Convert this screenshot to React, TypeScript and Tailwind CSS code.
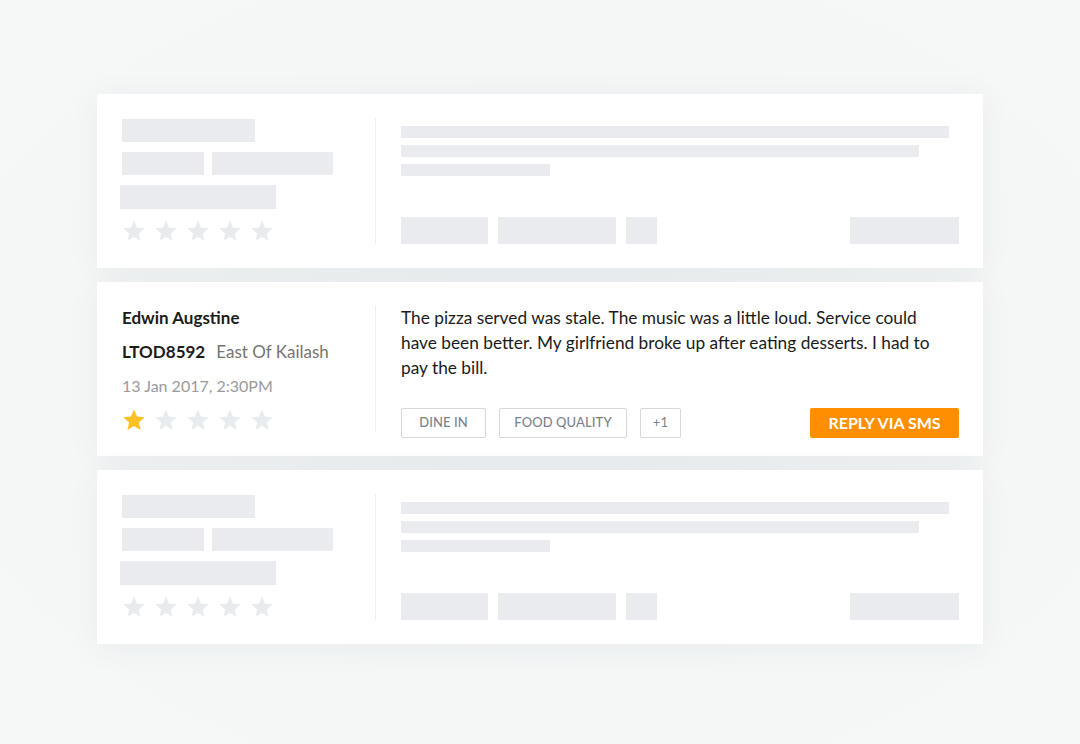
const Star = ({ filled }: { filled?: boolean }) => (
  <svg width="24" height="24" viewBox="0 0 24 24" className="shrink-0">
    <path
      d="M12 1.5l3.1 7.1 7.6.7-5.8 5.1 1.7 7.5L12 17.9l-6.6 4 1.7-7.5-5.8-5.1 7.6-.7z"
      fill={filled ? '#fbc124' : '#e9ecef'}
    />
  </svg>
);

const Stars = ({ count = 0 }: { count?: number }) => (
  <div className="flex h-6 items-center gap-2">
    {[0, 1, 2, 3, 4].map((i) => (
      <Star key={i} filled={i < count} />
    ))}
  </div>
);

const Bar = ({ className }: { className: string }) => <div className={`bg-[#e9ebee] ${className}`} />;

const SkeletonCard = () => (
  <div className="flex h-[174px] bg-white shadow-[0_4px_30px_rgba(30,50,60,0.06)]">
    <div className="flex w-[278px] shrink-0 flex-col gap-[10px] pl-[25px] pt-[25px]">
      <Bar className="h-[23px] w-[133px]" />
      <div className="flex gap-2">
        <Bar className="h-[23px] w-[82px]" />
        <Bar className="h-[23px] w-[121px]" />
      </div>
      <Bar className="-ml-[2px] h-[24px] w-[156px]" />
      <Stars />
    </div>
    <div className="my-6 w-px bg-[#eceef0]" />
    <div className="flex flex-1 flex-col pl-[25px] pr-6 pt-8 pb-6">
      <div className="flex flex-col gap-[7px]">
        <Bar className="h-3 w-[548px]" />
        <Bar className="h-3 w-[518px]" />
        <Bar className="h-3 w-[149px]" />
      </div>
      <div className="mt-auto flex h-[27px] gap-[10px]">
        <Bar className="h-full w-[87px]" />
        <Bar className="h-full w-[118px]" />
        <Bar className="h-full w-[31px]" />
        <Bar className="ml-auto h-full w-[109px]" />
      </div>
    </div>
  </div>
);

const Tag = ({ label, className }: { label: string; className: string }) => (
  <span
    className={`flex h-[30px] items-center justify-center rounded-[2px] border border-[#d3d9dd] text-[13px] font-medium tracking-[0.1px] text-[#7b8389] ${className}`}
  >
    {label}
  </span>
);

const ReviewCard = () => (
  <div className="flex h-[174px] bg-white shadow-[0_4px_30px_rgba(30,50,60,0.06)]">
    <div className="flex w-[278px] shrink-0 flex-col gap-[10px] pl-[25px] pt-6">
      <div className="flex h-6 items-center text-[17px] font-bold text-[#1b1b1b]">Edwin Augstine</div>
      <div className="flex h-6 items-center gap-[11px] text-[17px]">
        <span className="font-bold text-[#1b1b1b]">LTOD8592</span>
        <span className="text-[#757575]">East Of Kailash</span>
      </div>
      <div className="flex h-6 items-center text-[16px] text-[#9a9a9a]">13 Jan 2017, 2:30PM</div>
      <Stars count={1} />
    </div>
    <div className="my-6 w-px bg-[#eceef0]" />
    <div className="flex flex-1 flex-col pl-[25px] pr-6 pt-[23px] pb-[18px]">
      <p className="max-w-[540px] text-[17.3px] leading-[25px] text-[#1b1b1b]">
        The pizza served was stale. The music was a little loud. Service could have been better. My girlfriend broke up after eating desserts. I had to pay the bill.
      </p>
      <div className="mt-auto flex items-center gap-[13px]">
        <Tag label="DINE IN" className="w-[85px]" />
        <Tag label="FOOD QUALITY" className="w-[128px]" />
        <Tag label="+1" className="w-[41px] font-normal" />
        <button className="ml-auto flex h-[30px] w-[149px] items-center justify-center rounded-[2px] bg-[#ff8f00] text-[16px] font-bold text-white">
          REPLY VIA SMS
        </button>
      </div>
    </div>
  </div>
);

export default function App() {
  return (
    <div
      className="flex h-[744px] w-[1080px] flex-col bg-[radial-gradient(ellipse_at_center,#eef1f3_0%,#f5f7f7_60%,#f6f8f8_100%)] pl-[97px] pt-[94px]"
      style={{ fontFamily: 'Lato, "Noto Sans", sans-serif' }}
    >
      <div className="flex w-[886px] flex-col gap-[14px]">
        <SkeletonCard />
        <ReviewCard />
        <SkeletonCard />
      </div>
    </div>
  );
}
